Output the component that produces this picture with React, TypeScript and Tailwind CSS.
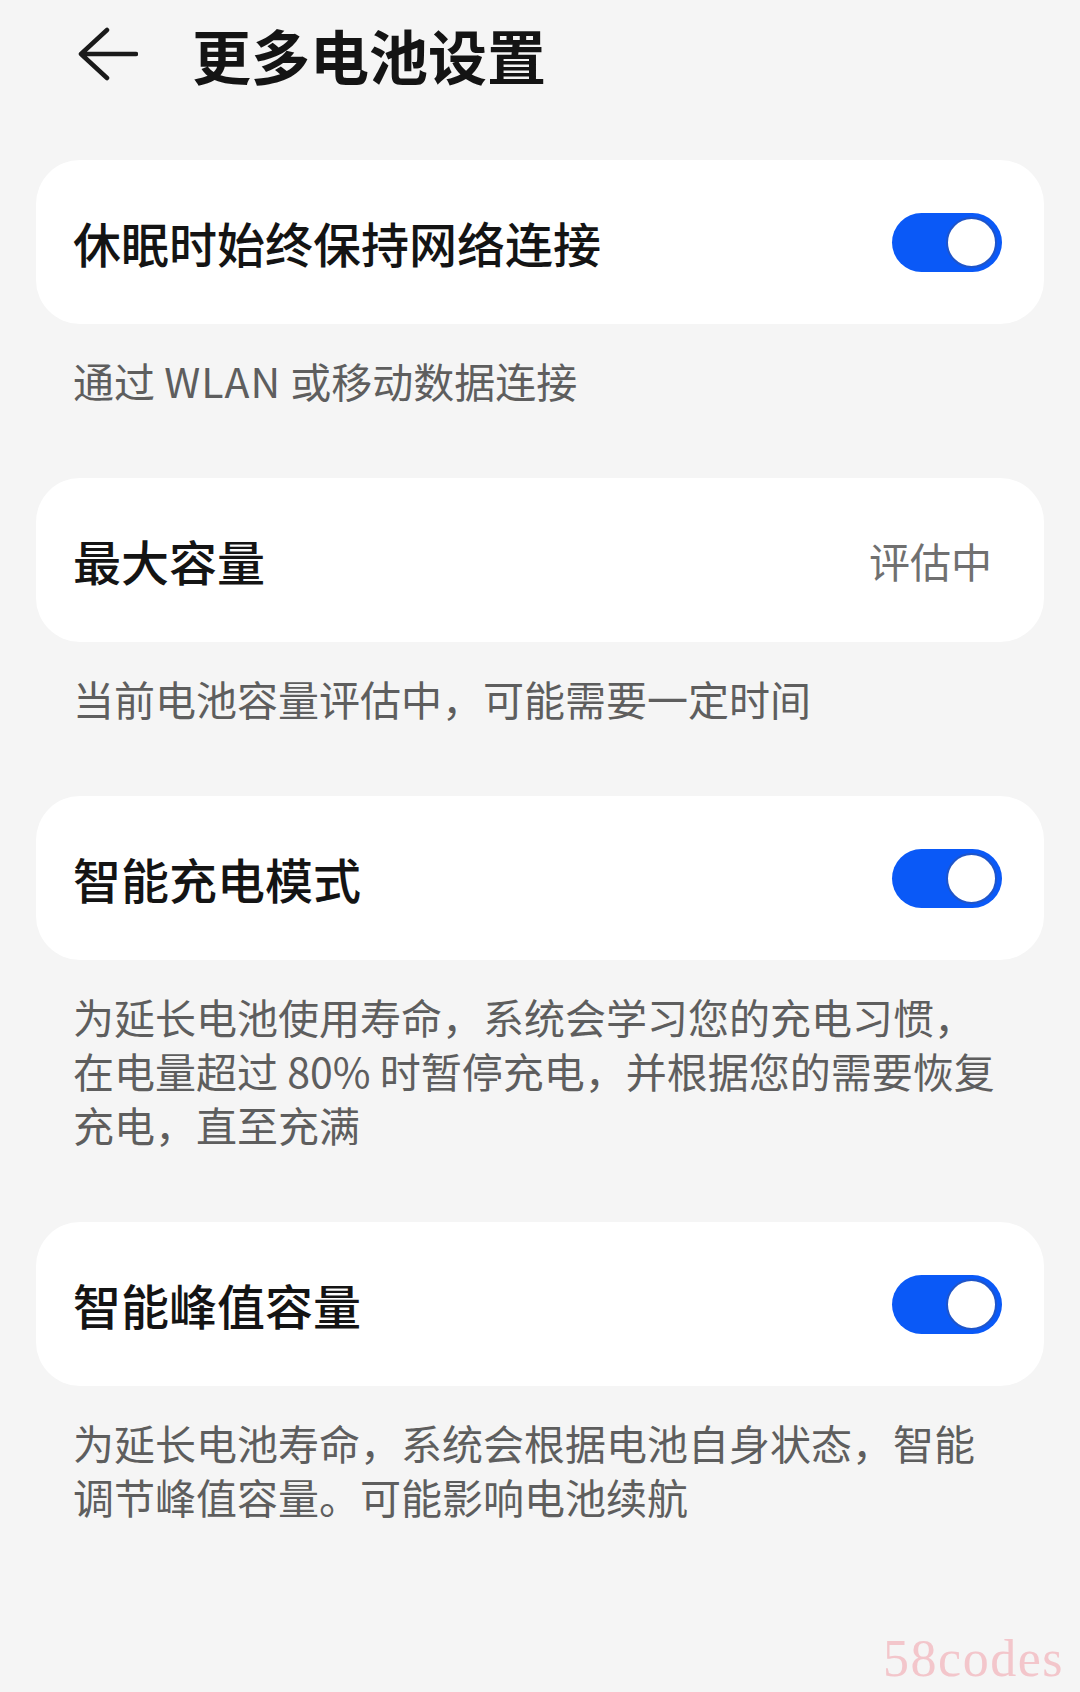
import React from 'react';

const FONT = '"Noto Sans CJK SC", "Noto Sans", sans-serif';

const Toggle: React.FC = () => (
    <div className="relative w-[110px] h-[59px] rounded-full bg-[#0a59f7] shrink-0">
        <div className="absolute right-[5px] top-[4px] w-[51px] h-[51px] rounded-full bg-white border-[2px] border-[#1f55c9]" />
    </div>
);

interface CardProps {
    title: string;
    right?: React.ReactNode;
}

const Card: React.FC<CardProps> = ({ title, right }) => (
    <div className="mx-[36px] h-[164px] bg-white rounded-[44px] flex items-center justify-between pl-[37px] pr-[42px]">
        <span className="text-[48px] font-medium text-[#141414] leading-none">{title}</span>
        {right}
    </div>
);

const Note: React.FC<{ children: React.ReactNode }> = ({ children }) => (
    <div className="px-[73px] pt-[29px] pb-[71px] text-[41px] leading-[54px] text-[#5e5e5e]">
        {children}
    </div>
);

export default function App() {
    return (
        <div
            className="relative w-[1080px] h-[1692px] bg-[#f5f5f5] overflow-hidden"
            style={{ fontFamily: FONT }}
        >
            <div className="h-[108px] flex items-center pl-[78px]">
                <svg width="60" height="54" viewBox="0 0 60 54" fill="none">
                    <path
                        d="M29 3 L3 27 L29 51 M3 27 H58"
                        stroke="#1a1a1a"
                        strokeWidth="4.5"
                        strokeLinecap="round"
                        strokeLinejoin="round"
                    />
                </svg>
                <span className="ml-[54px] text-[59px] font-semibold text-[#141414] leading-none">
                    更多电池设置
                </span>
            </div>

            <div className="mt-[52px]">
                <Card title="休眠时始终保持网络连接" right={<Toggle />} />
                <Note>
                    通过 <span className="tracking-[1px]">WLAN</span> 或移动数据连接
                </Note>

                <Card
                    title="最大容量"
                    right={<span className="text-[41px] text-[#707070] leading-none mr-[10px]">评估中</span>}
                />
                <Note>当前电池容量评估中，可能需要一定时间</Note>

                <Card title="智能充电模式" right={<Toggle />} />
                <Note>
                    为延长电池使用寿命，系统会学习您的充电习惯，
                    <br />
                    在电量超过 80% 时暂停充电，并根据您的需要恢复
                    <br />
                    充电，直至充满
                </Note>

                <Card title="智能峰值容量" right={<Toggle />} />
                <Note>
                    为延长电池寿命，系统会根据电池自身状态，智能
                    <br />
                    调节峰值容量。可能影响电池续航
                </Note>
            </div>

            <div
                className="absolute right-[16px] top-[1633px] text-[52px] leading-none tracking-[1.5px] text-[#f3c6cb]"
                style={{ fontFamily: '"Liberation Serif", serif' }}
            >
                58codes
            </div>
        </div>
    );
}
